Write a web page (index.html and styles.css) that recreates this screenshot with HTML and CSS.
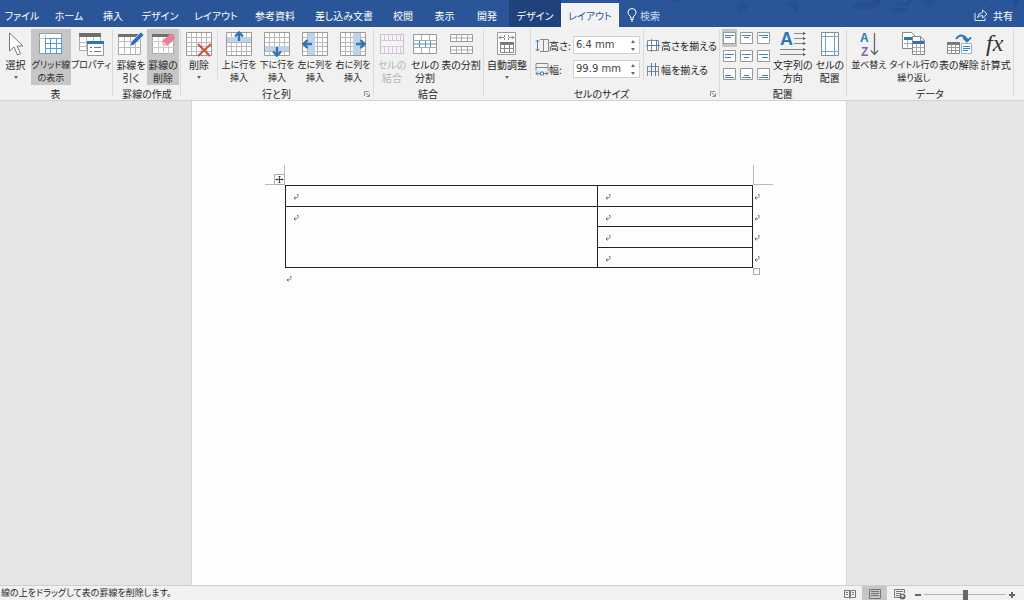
FILE: index.html
```html
<!DOCTYPE html>
<html lang="ja">
<head>
<meta charset="utf-8">
<title>文書</title>
<link rel="stylesheet" href="styles.css">
</head>
<body>
<svg class="defs" aria-hidden="true">
  <symbol id="grid" viewBox="0 0 26 24">
    <path d="M.5.5h25v23H.5z" fill="#fff"/>
    <path d="M5.5 0v24M10.5 0v24M15.5 0v24M20.5 0v24M0 5.5h26M0 10.5h26M0 14.5h26M0 19.5h26" stroke="#b9b9b9" fill="none"/>
    <path d="M.5.5h25v23H.5z" fill="none" stroke="#9a9a9a"/>
  </symbol>
  <symbol id="arrow" viewBox="0 0 10 10">
    <path d="M5 10V2M1 5.500 5 1.500 9 5.500" fill="none" stroke="#2f75b5" stroke-width="2.400"/>
  </symbol>
  <symbol id="mark" viewBox="0 0 6 6">
    <path d="M4 .5h1v2L3.500 4H1M2.500 2.500 1 4l1.500 1.500" fill="none" stroke="#555" stroke-width=".8"/>
  </symbol>
  <symbol id="launch" viewBox="0 0 6 6">
    <path d="M.5 5V.5H5M2 2l3 3M5.500 2.500v3h-3" fill="none" stroke="#777" stroke-width=".8"/>
  </symbol>
</svg>

<header class="titlebar">
  <svg class="leaves" viewBox="0 0 384 27" aria-hidden="true">
    <g fill="#264f90">
      <path d="M93 3l7 2 2-5 3 4 5 0-4 3 1 4-5-2-3 4-2-5zM145 2l8 2 3-4 1 5 5 1-5 3-1 4-3-5zM192 0l4 3-3 0z"/>
      <path d="M212 8q8-9 16-5l4-3h8q-2 8-10 9-8 1-18-1zM233 0h8l-2 7q-6-2-6-7zM250 12q4-5 14-4l4 1q-6 5-18 3z"/>
      <path d="M255 2l10 1 3-3h5l-4 5-12 0zM280 0h16q-2 5-7 5l1 6q-5-3-3-7zM32 0l6 3 4-3zM340 0h7l-2 3zM369 0h11l-4 8q-5-3-2-6z"/>
    </g>
    <path d="M248 9q16-2 25-9M228 5q8-2 12-5" fill="none" stroke="#264f90"/>
  </svg>
  <nav class="tabs">
    <button class="tab">ファイル</button>
    <button class="tab">ホーム</button>
    <button class="tab">挿入</button>
    <button class="tab">デザイン</button>
    <button class="tab">レイアウト</button>
    <button class="tab">参考資料</button>
    <button class="tab">差し込み文書</button>
    <button class="tab">校閲</button>
    <button class="tab">表示</button>
    <button class="tab">開発</button>
    <button class="tab tab-context">デザイン</button>
    <button class="tab tab-active">レイアウト</button>
  </nav>
  <button class="search">
    <svg width="10" height="14" viewBox="0 0 10 14"><path d="M3.500 10V8.500Q1 6.500 1 4.500a4 4 0 0 1 8 0Q9 6.500 6.500 8.500V10zM3.500 11.500h3M4 13h2" fill="none" stroke="#fff"/></svg>
    検索
  </button>
  <button class="share">
    <svg width="14" height="14" viewBox="0 0 14 14"><path d="M1 5v7.500h10V10M3.500 9.500Q4 5 8.500 4.500V2l4.500 4-4.500 4V7.500Q5.500 7.500 3.500 9.500z" fill="none" stroke="#dbe6f5"/></svg>
    共有
  </button>
</header>

<section class="ribbon">
  <div class="group pad-end">
    <div class="items">
      <button class="cmd w31">
        <svg width="26" height="24" viewBox="0 0 26 24"><path d="M6.500 1v18l4.500-4 3.500 8 3-1.500-3.500-7.500h6z" fill="#fff" stroke="#777"/></svg>
        選択<span class="caret"></span>
      </button>
      <button class="cmd w40 small pressed">
        <svg width="26" height="24" viewBox="0 0 26 24"><path d="M1.500 1.500h22v20h-22z" fill="#fff" stroke="#9a9a9a"/><path d="M1 6.500h23M7.500 1v21" stroke="#b9cfe4"/><path d="M7 11.500h17M7 16.500h17M12.500 6v16M18.500 6v16M23.500 6v16M7 21.500h17M7.500 6v16M7 6.500h17" stroke="#5b9bd5"/></svg>
        グリッド線<br>の表示
      </button>
      <button class="cmd w40 small">
        <svg width="26" height="24" viewBox="0 0 26 24"><path d="M1.500 1.500h21v17h-21z" fill="#fff" stroke="#aaa"/><path d="M1 10.500h22M1 14.500h22M8.500 4v15M15.500 4v15" stroke="#bbb"/><path d="M1 1h22v4H1z" fill="#707070"/><path d="M9.500 9.500h16v14h-16z" fill="#fff" stroke="#999"/><path d="M9 9h17v3H9z" fill="#2f75b5"/><path d="M12 15.500h2M12 19.500h2M16 15.500h7M16 19.500h7" stroke="#4a7fb5"/></svg>
        プロパティ
      </button>
    </div>
    <div class="name">表</div>
  </div>

  <div class="group pad">
    <div class="items">
      <button class="cmd w32">
        <svg width="26" height="24" viewBox="0 0 26 24"><path d="M.5 2.500h22v20H.5z" fill="#fff" stroke="#aaa"/><path d="M0 9.500h23M0 15.500h23M6.500 5v18M12.500 5v18M17.500 5v18" stroke="#bbb"/><path d="M0 2h20v3H0z" fill="#707070"/><path d="M12 14l1-4L23 0l3 3-10 10z" fill="#2f75b5" stroke="#f1f1f1" stroke-width=".7"/></svg>
        罫線を<br>引く
      </button>
      <button class="cmd w32 pressed">
        <svg width="26" height="24" viewBox="0 0 26 24"><path d="M2.500 2.500h21v19h-21z" fill="#fff" stroke="#aaa"/><path d="M2 9.500h22M2 15.500h22M8.500 5v17M13.500 5v17M18.500 5v17" stroke="#ccc"/><path d="M2 2h19v3H2z" fill="#707070"/><path d="M12 9l8-7q2-1 4 1l1 3q0 1-8 8-2 0-4-2z" fill="#e87f96"/><path d="M12 9q4 1 5 5-3 0-4-1-2-2-1-4z" fill="#f6b7c3"/></svg>
        罫線の<br>削除
      </button>
    </div>
    <div class="name">罫線の作成</div>
  </div>

  <div class="group pad-end">
    <div class="items">
      <button class="cmd w36">
        <svg width="26" height="24"><use href="#grid"/><path d="M12 12l12 12M25 12L12 24" stroke="#d0503a" stroke-width="2"/></svg>
        削除<span class="caret"></span>
      </button>
      <div class="rule"></div>
      <button class="cmd w38 small">
        <svg width="26" height="24"><use href="#grid"/><path d="M1 5h24v5H1z" fill="#bdd3ea"/><use href="#arrow" x="8" y="-1" width="10" height="10"/></svg>
        上に行を<br>挿入
      </button>
      <button class="cmd w38 small">
        <svg width="26" height="24"><use href="#grid"/><path d="M1 14h24v5H1z" fill="#bdd3ea"/><use href="#arrow" x="8" y="-25" width="10" height="10" transform="scale(1 -1)"/></svg>
        下に行を<br>挿入
      </button>
      <button class="cmd w38 small">
        <svg width="26" height="24"><use href="#grid"/><path d="M6 1h7v22H6z" fill="#bdd3ea"/><use href="#arrow" x="-17" y="0" width="10" height="10" transform="rotate(-90)"/></svg>
        左に列を<br>挿入
      </button>
      <button class="cmd w38 small">
        <svg width="26" height="24"><use href="#grid"/><path d="M13 1h7v22h-7z" fill="#bdd3ea"/><use href="#arrow" x="7" y="-26" width="10" height="10" transform="rotate(90)"/></svg>
        右に列を<br>挿入
      </button>
    </div>
    <div class="name">行と列</div>
    <button class="launcher" aria-label="行と列の詳細"><svg width="6" height="6"><use href="#launch"/></svg></button>
  </div>

  <div class="group pad-end">
    <div class="items">
      <button class="cmd w36" disabled>
        <svg width="26" height="24" viewBox="0 0 26 24"><path d="M1.500 2.500h23v19h-23z" fill="#f7f2f8" stroke="#c9bfcc"/><path d="M1 8.500h24M1 14.500h24M9.500 2v6M17.500 2v6M9.500 15v6M17.500 15v6M5.500 2v6M13.500 2v6M21.500 2v6M5.500 15v6M13.500 15v6M21.500 15v6" stroke="#d3c8d6"/></svg>
        セルの<br>結合
      </button>
      <button class="cmd w30">
        <svg width="26" height="24" viewBox="0 0 26 24"><path d="M1.500 2.500h23v19h-23z" fill="#fff" stroke="#999"/><path d="M1 8.500h24M1 15.500h24M9.500 2v6M17.500 2v6M9.500 16v6M17.500 16v6" stroke="#aaa"/><path d="M1 12h24M7.500 9v6M13.500 9v6M18.500 9v6" stroke="#4f93cc"/></svg>
        セルの<br>分割
      </button>
      <button class="cmd w42">
        <svg width="26" height="24" viewBox="0 0 26 24"><path d="M2.500 2.500h22v7h-22zM2.500 14.500h22v7h-22z" fill="#fff" stroke="#999"/><path d="M2 6h22M2 18h22M8.500 2v7M13.500 2v7M19.500 2v7M8.500 14v7M13.500 14v7M19.500 14v7" stroke="#aaa"/></svg>
        表の分割
      </button>
    </div>
    <div class="name">結合</div>
  </div>

  <div class="group">
    <div class="items">
      <button class="cmd w46">
        <svg width="26" height="24" viewBox="0 0 26 24"><path d="M3.500.5h18v22h-18z" fill="#fff" stroke="#999"/><path d="M5 5.500h5M15 5.500h5M7 3.500l-2 2 2 2M18 3.500l2 2-2 2M10.500 3v2M14.500 3v2M10.500 6v2M14.500 6v2" fill="none" stroke="#888"/><path d="M6 10h14v3H6z" fill="#777"/><path d="M6.500 12.500h13v8h-13zM6 16.500h14M10.500 12v9M15.500 12v9" fill="none" stroke="#888"/></svg>
        自動調整<span class="caret"></span>
      </button>
      <div class="rule"></div>
      <div class="sizes">
        <label for="h">
          <svg width="14" height="13" viewBox="0 0 14 13"><path d="M2.500 1v11M.5 3l2-2 2 2M.5 10l2 2 2-2" fill="none" stroke="#4a7fb5"/><path d="M5 .5h8.500v12H5M8.500 0v13" fill="none" stroke="#888"/></svg>
          高さ:
        </label>
        <div class="spin">
          <input id="h" type="text" value="6.4 mm">
          <div class="steps"><button class="up" aria-label="高さを増やす"></button><button class="down" aria-label="高さを減らす"></button></div>
        </div>
        <label for="w">
          <svg width="14" height="13" viewBox="0 0 14 13"><path d="M1 8V.5h12V8M1 4.500h12" fill="none" stroke="#888"/><path d="M1 10.500h4M9 10.500h4M3 8.500l-2 2 2 2M11 8.500l2 2-2 2M5.500 9h3v3h-3z" fill="none" stroke="#4a7fb5"/></svg>
          幅:
        </label>
        <div class="spin">
          <input id="w" type="text" value="99.9 mm">
          <div class="steps"><button class="up" aria-label="幅を増やす"></button><button class="down" aria-label="幅を減らす"></button></div>
        </div>
      </div>
      <div class="rule"></div>
      <div class="evens">
        <button>
          <svg width="14" height="13" viewBox="0 0 14 13"><path d="M1.500 1.500h11v10h-11zM5.500 0v13" fill="#fff" stroke="#888"/><path d="M0 6.500h14M10.500 1v11" stroke="#4a7fb5"/></svg>
          高さを揃える
        </button>
        <button>
          <svg width="14" height="13" viewBox="0 0 14 13"><path d="M1 3.500h12M1 8.500h12M1.500 4v9M12.500 4v9" stroke="#888"/><path d="M5.500 0v13M9.500 0v13" stroke="#4a7fb5"/></svg>
          幅を揃える
        </button>
      </div>
    </div>
    <div class="name">セルのサイズ</div>
    <button class="launcher" aria-label="セルのサイズの詳細"><svg width="6" height="6"><use href="#launch"/></svg></button>
  </div>

  <div class="group">
    <div class="items">
      <div class="aligns">
        <button class="pressed" aria-label="上揃え(左)"><svg width="13" height="12"><path d="M.5.5h12v11H.5z"/><path class="ln" d="M2 3.500h9M2 5.500h6"/></svg></button>
        <button aria-label="上揃え(中央)"><svg width="13" height="12"><path d="M.5.5h12v11H.5z"/><path class="ln" d="M2 3.500h9M4 5.500h5"/></svg></button>
        <button aria-label="上揃え(右)"><svg width="13" height="12"><path d="M.5.5h12v11H.5z"/><path class="ln" d="M2 3.500h9M5 5.500h6"/></svg></button>
        <button aria-label="中央揃え(左)"><svg width="13" height="12"><path d="M.5.5h12v11H.5z"/><path class="ln" d="M2 4.500h9M2 7.500h6"/></svg></button>
        <button aria-label="中央揃え"><svg width="13" height="12"><path d="M.5.5h12v11H.5z"/><path class="ln" d="M2 4.500h9M4 7.500h5"/></svg></button>
        <button aria-label="中央揃え(右)"><svg width="13" height="12"><path d="M.5.5h12v11H.5z"/><path class="ln" d="M2 4.500h9M5 7.500h6"/></svg></button>
        <button aria-label="下揃え(左)"><svg width="13" height="12"><path d="M.5.5h12v11H.5z"/><path class="ln" d="M2 9.500h9M2 7.500h6"/></svg></button>
        <button aria-label="下揃え(中央)"><svg width="13" height="12"><path d="M.5.5h12v11H.5z"/><path class="ln" d="M2 9.500h9M4 7.500h5"/></svg></button>
        <button aria-label="下揃え(右)"><svg width="13" height="12"><path d="M.5.5h12v11H.5z"/><path class="ln" d="M2 9.500h9M5 7.500h6"/></svg></button>
      </div>
      <button class="cmd w42">
        <svg width="26" height="24" viewBox="0 0 26 24"><text x="0" y="13" class="ic-dir">A</text><path d="M14 1.500h11M14 6.500h11M14 11.500h11M0 17.500h25M0 22.500h25" stroke="#888"/><path d="M23 0l3 1.500-3 1.500zM23 5l3 1.500-3 1.500zM23 10l3 1.500-3 1.500zM23 16l3 1.500-3 1.500zM23 21l3 1.500-3 1.500z" fill="#555"/></svg>
        文字列の<br>方向
      </button>
      <button class="cmd w32">
        <svg width="26" height="24" viewBox="0 0 26 24"><path d="M4.500.5h17v23h-17z" fill="#fff" stroke="#888"/><path d="M8.500 0v24M17.500 0v24M4 4.500h18M4 19.500h18" stroke="#6ea5d6"/></svg>
        セルの<br>配置
      </button>
    </div>
    <div class="name">配置</div>
  </div>

  <div class="group pad-both">
    <div class="items">
      <button class="cmd w42 small">
        <svg width="26" height="24" viewBox="0 0 26 24"><text x="4" y="10" class="ic-a">A</text><text x="5" y="24" class="ic-z">Z</text><path d="M18.500 1v21M15 18.500l3.500 4 3.500-4" fill="none" stroke="#666" stroke-width="1.300"/></svg>
        並べ替え
      </button>
      <button class="cmd w48 small">
        <svg width="26" height="24" viewBox="0 0 26 24"><path d="M1.500.5h9l4 4v12h-13z" fill="#fff" stroke="#888"/><path d="M3 5h9v3H3z" fill="#2f75b5"/><path d="M3 11.500h8M6.500 8v7" stroke="#aaa"/><path d="M11.500 4.500h8l4 4v14h-12z" fill="#fff" stroke="#888"/><path d="M19.500 4v5h4" fill="none" stroke="#888"/><path d="M12 9h11v3H12z" fill="#2f75b5"/><path d="M12 15.500h11M12 19.500h11M15.500 12v10M19.500 12v10" stroke="#aaa"/></svg>
        タイトル行の<br>繰り返し
      </button>
      <button class="cmd w42">
        <svg width="26" height="24" viewBox="0 0 26 24"><path d="M10 7q5-7 11 0v2M17 5.500l4 4 4-4" fill="none" stroke="#2f75b5" stroke-width="1.800"/><path d="M1.500 10.500h12v11h-12z" fill="#fff" stroke="#888"/><path d="M1 10h13v3H1z" fill="#777"/><path d="M1 15.500h12M1 18.500h12M5.500 12v9M9.500 12v9" stroke="#999"/><path d="M15.500 11.500h10v10h-10z" fill="#fff" stroke="#8fb5da"/><path d="M17 14.500h7M17 16.500h7M17 18.500h5" stroke="#4a7fb5"/></svg>
        表の解除
      </button>
      <button class="cmd w32">
        <svg width="26" height="24" viewBox="0 0 26 24"><text x="3" y="19" class="ic-fx">fx</text></svg>
        計算式
      </button>
    </div>
    <div class="name">データ</div>
  </div>
</section>

<main class="canvas">
  <article class="page">
    <div class="table-wrap">
      <span class="crop crop-l"></span><span class="crop crop-r"></span>
      <span class="move"><svg width="9" height="9" viewBox="0 0 9 9"><path d="M4.500 1v7M1 4.500h7M3.500 2l1-1 1 1M3.500 7l1 1 1-1M2 3.500l-1 1 1 1M7 3.500l1 1-1 1" fill="none" stroke="#333" stroke-width=".9"/></svg></span>
      <span class="resize"></span>
      <table class="doc-table">
        <colgroup><col class="col-wide"><col></colgroup>
        <tr><td><svg class="m"><use href="#mark"/></svg></td><td><svg class="m"><use href="#mark"/></svg><svg class="m end"><use href="#mark"/></svg></td></tr>
        <tr><td rowspan="3"><svg class="m"><use href="#mark"/></svg></td><td><svg class="m"><use href="#mark"/></svg><svg class="m end"><use href="#mark"/></svg></td></tr>
        <tr><td><svg class="m"><use href="#mark"/></svg><svg class="m end"><use href="#mark"/></svg></td></tr>
        <tr><td><svg class="m"><use href="#mark"/></svg><svg class="m end"><use href="#mark"/></svg></td></tr>
      </table>
    </div>
    <p class="after"><svg class="m"><use href="#mark"/></svg></p>
  </article>
</main>

<footer class="status">
  <span class="message">線の上をドラッグして表の罫線を削除します。</span>
  <button class="view" aria-label="閲覧モード"><svg width="12" height="10" viewBox="0 0 12 10"><path d="M.5 1.500h5v7h-5zM6.500 1.500h5v7h-5zM2 3.500h2M2 5.500h2M8 3.500h2M8 5.500h2M5.500 9.500h1" fill="none" stroke="#777"/></svg></button>
  <button class="view on" aria-label="印刷レイアウト"><svg width="12" height="10" viewBox="0 0 12 10"><path d="M.5.5h11v9H.5zM2 2.500h8M2 4.500h8M2 6.500h8" fill="none" stroke="#777"/></svg></button>
  <button class="view" aria-label="Web レイアウト"><svg width="12" height="11" viewBox="0 0 12 11"><path d="M6 8.500H.5v-8h10V4M2 2.500h7M2 4.500h5M2 6.500h3" fill="none" stroke="#777"/><circle cx="8.500" cy="7.500" r="3" fill="#666"/><path d="M7 6.500l2-1 1 2-2 1z" fill="#eee"/></svg></button>
  <button class="zoom minus" aria-label="縮小"></button>
  <input class="slider" type="range" min="0" max="100" value="50" aria-label="ズーム">
  <button class="zoom plus" aria-label="拡大"></button>
</footer>
</body>
</html>
```

FILE: styles.css
```css
* { box-sizing: border-box; }
body {
  margin: 0;
  height: 100vh;
  display: flex;
  flex-direction: column;
  overflow: hidden;
  font: 10px/13px "Noto Sans CJK JP", sans-serif;
  font-feature-settings: "palt";
  color: #262626;
}
button {
  margin: 0;
  padding: 0;
  border: 0;
  background: none;
  font: inherit;
  font-feature-settings: inherit;
  color: inherit;
  white-space: nowrap;
}
svg { display: block; flex: none; overflow: visible; }
.defs { position: absolute; width: 0; height: 0; }

.titlebar {
  position: relative;
  display: flex;
  align-items: stretch;
  height: 27px;
  background: #2a5699;
  color: #fff;
}
.leaves { position: absolute; right: 0; top: 0; width: 384px; height: 27px; overflow: hidden; }
.tabs {
  display: grid;
  grid-template-columns: 44px 50px 38px 56px 56px 62px 76px 42px 41px 44px 52px 58px;
}
.tab { padding-top: 3px; }
.tab-context { background: #1e4279; }
.tab-active { margin-top: 3px; padding-top: 0; background: #f3f3f3; color: #2a5699; }
.search, .share { display: flex; align-items: center; gap: 3px; padding-top: 3px; position: relative; }
.search { margin-left: 8px; color: #cfdcf0; }
.share { margin-left: auto; margin-right: 11px; gap: 5px; }

.ribbon {
  display: flex;
  height: 74px;
  background: #f1f1f1;
  border-bottom: 1px solid #d2d2d2;
}
.group {
  position: relative;
  display: flex;
  flex-direction: column;
  padding: 2px 1px 0 0;
  background: linear-gradient(#d8d8d8, #d8d8d8) right 3px / 1px 66px no-repeat;
}
.group.pad { padding-left: 2px; padding-right: 2px; }
.group.pad-end { padding-right: 2px; }
.group.pad-both { padding-left: 1px; padding-right: 2px; }
.items { display: flex; height: 58px; }
.name { text-align: center; }
.cmd {
  display: flex;
  flex-direction: column;
  align-items: center;
  height: 56px;
  padding-top: 3px;
}
.cmd svg { margin-bottom: 2px; }
.cmd.small { font-size: 9px; }
.cmd:disabled { color: #b5b5b5; }
.pressed { background: #c6c6c6; }
.w30 { width: 30px; }
.w31 { width: 31px; }
.w32 { width: 32px; }
.w36 { width: 36px; }
.w38 { width: 38px; }
.w40 { width: 40px; }
.w42 { width: 42px; }
.w46 { width: 46px; }
.w48 { width: 48px; }
.caret {
  margin-top: 5px;
  border: 2px solid transparent;
  border-top: 3px solid #666;
  border-bottom: 0;
}
.rule { width: 1px; height: 50px; margin-right: 2px; background: #dcdcdc; }
.launcher { position: absolute; right: 4px; bottom: 3px; }

.sizes {
  display: grid;
  grid-template-columns: 38px 67px;
  grid-auto-rows: 18px;
  row-gap: 6px;
  align-content: start;
  padding: 7px 3px 0 2px;
}
.sizes label { display: flex; align-items: center; }
.spin { display: flex; border: 1px solid #d0d0d0; background: #fff; }
.spin input {
  flex: 1;
  min-width: 0;
  border: 0;
  padding: 0 0 0 2px;
  background: none;
  font: 10px/16px "DejaVu Sans", sans-serif;
  color: #444;
}
.steps { display: grid; grid-template-rows: 1fr 1fr; width: 12px; place-items: center; }
.up, .down { border: 2px solid transparent; }
.up { border-bottom: 3px solid #666; border-top: 0; }
.down { border-top: 3px solid #666; border-bottom: 0; }
.evens { display: grid; grid-auto-rows: 18px; row-gap: 6px; align-content: start; padding: 7px 2px 0 0; }
.evens button { display: flex; align-items: center; gap: 1px; }

.aligns {
  display: grid;
  grid-template-columns: repeat(3, 17px);
  grid-auto-rows: 18px;
  align-content: start;
  padding-left: 1px;
}
.aligns button { display: grid; place-items: center; width: 15px; justify-self: center; }
.aligns path { fill: #fff; stroke: #999; }
.aligns .ln { stroke: #4a7fb5; }

.ic-a { font: bold 12px "Liberation Sans", sans-serif; fill: #2f75b5; }
.ic-z { font: bold 12px "Liberation Sans", sans-serif; fill: #8e5bb5; }
.ic-dir { font: bold 18px "Liberation Sans", sans-serif; fill: #2f75b5; }
.ic-fx { font: italic 24px "Liberation Serif", serif; fill: #333; }

.canvas {
  flex: 1;
  display: flex;
  justify-content: center;
  padding-left: 14px;
  background: #e6e6e6;
}
.page {
  width: 65%;
  padding: 84px 93px 0;
  background: #fdfdfd;
  border: solid #d4d4d4;
  border-width: 0 1px;
}
.table-wrap { position: relative; }
.doc-table { width: 100%; table-layout: fixed; border-collapse: collapse; }
.col-wide { width: 66.7%; }
.doc-table td {
  position: relative;
  height: 20px;
  padding: 8px 0 0 7px;
  border: 1px solid #222;
  vertical-align: top;
}
.doc-table tr:nth-child(odd) td { height: 21px; }
.m { width: 6px; height: 6px; }
.end { position: absolute; right: -8px; top: 8px; }
.after { margin: 0; padding: 8px 0 0 1px; }
.crop { position: absolute; width: 20px; height: 20px; top: -20px; border: 0 solid #bbb; border-bottom-width: 1px; }
.crop-l { left: -20px; border-right-width: 1px; }
.crop-r { right: -20px; border-left-width: 1px; }
.move { position: absolute; left: -11px; top: -11px; border: 1px solid #aaa; background: #fff; }
.resize { position: absolute; right: -7px; bottom: -7px; width: 7px; height: 7px; border: 1px solid #aaa; background: #fff; }

.status {
  display: flex;
  align-items: center;
  height: 15px;
  background: #f1f1f1;
  border-top: 1px solid #cfcfcf;
}
.message { flex: 1; padding-left: 1px; font-size: 9px; line-height: 14px; }
.view { display: grid; place-items: center; width: 25px; height: 14px; padding-top: 2px; }
.view.on { background: #c6c6c6; }
.zoom { width: 8px; height: 8px; margin-top: 3px; }
.minus { margin-left: 2px; background: linear-gradient(#666, #666) center / 6px 2px no-repeat; }
.plus {
  margin-right: 8px;
  background: linear-gradient(#666, #666) center / 6px 2px no-repeat, linear-gradient(#666, #666) center / 2px 6px no-repeat;
}
.slider {
  appearance: none;
  width: 82px;
  height: 10px;
  margin: 3px 2px 0;
  background: linear-gradient(#b5b5b5, #b5b5b5) center / 100% 1px no-repeat;
}
.slider::-webkit-slider-thumb { appearance: none; width: 5px; height: 10px; background: #666; }
```
